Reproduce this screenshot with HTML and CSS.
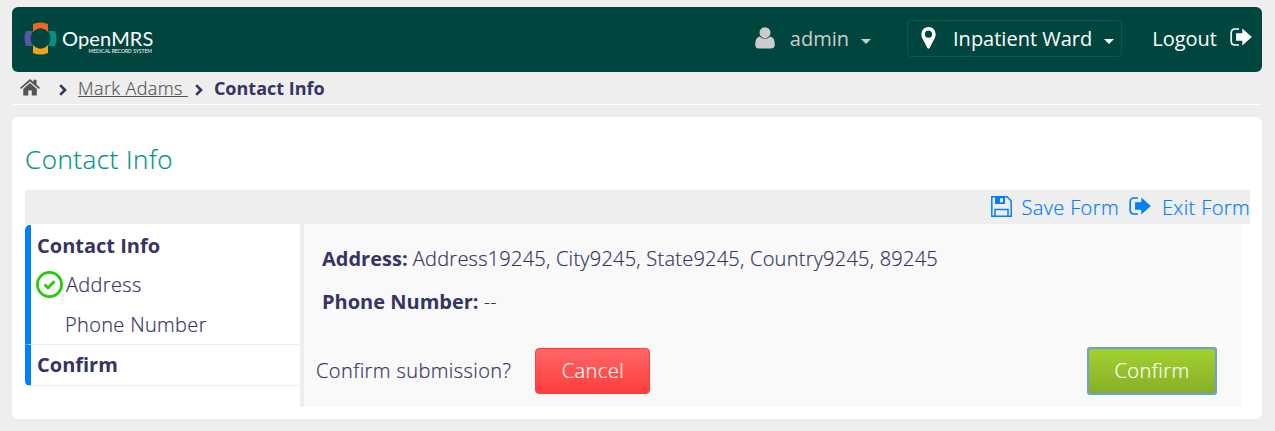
FILE: index.html
```html
<!DOCTYPE html>
<html lang="en">
<head>
<meta charset="utf-8">
<title>Contact Info</title>
<link rel="stylesheet" href="styles.css">
</head>
<body>
<svg width="0" height="0" class="defs">
  <symbol id="exit" viewBox="0 0 22 18">
    <path d="M9 1H5Q1.200 1 1.200 5v8q0 4 3.800 4h4" fill="none" stroke="currentColor" stroke-width="1.700"/>
    <path d="M6 5.300h6.300V.5L21.800 9l-9.500 8.500v-4.800H6z" fill="currentColor"/>
  </symbol>
  <symbol id="chevron" viewBox="0 0 8 12">
    <path d="M1.200 1.200L6 6l-4.800 4.800" fill="none" stroke="currentColor" stroke-width="2.600"/>
  </symbol>
</svg>
<header class="topbar">
  <div class="logo">
    <svg class="logo-mark" width="33" height="33" viewBox="0 0 33 33">
      <path d="M9 2Q16.500-1 24 2v8Q16.500 2.500 9 10z" fill="#f26522"/>
      <path d="M9 31q7.500 3 15 0v-8q-7.500 7.500-15 0z" fill="#eea616"/>
      <path d="M2 9q-3 7.500 0 15h7q-5-7.500 0-15z" fill="#5b57a6"/>
      <path d="M31 9q3 7.500 0 15h-7q5-7.500 0-15z" fill="#009384"/>
    </svg>
    <div class="logo-text"><span class="logo-name">OpenMRS</span><span class="logo-sub">MEDICAL RECORD SYSTEM</span></div>
  </div>
  <nav class="tools">
    <div class="user">
      <svg width="20" height="22" viewBox="0 0 20 22" fill="currentColor"><circle cx="10" cy="5.700" r="5.500"/><path d="M4.500 9.500Q10 14 15.500 9.500q4.300 1 4.300 8 0 4-3.800 4H4q-3.800 0-3.800-4 0-7 4.300-8z"/></svg>
      <span class="user-name">admin</span><i class="caret"></i>
    </div>
    <div class="location">
      <svg width="15" height="22" viewBox="0 0 15 22"><path fill="currentColor" fill-rule="evenodd" d="M7.500 0A7.200 7.200 0 0 1 14.700 7.200Q14.700 9 13.800 11L8.600 21q-1.100 1.400-2.200 0L1.200 11Q.3 9 .3 7.200A7.200 7.200 0 0 1 7.500 0zm0 3.600a3.600 3.600 0 1 0 0 7.200 3.600 3.600 0 0 0 0-7.200z"/></svg>
      <span class="location-name">Inpatient Ward</span><i class="caret"></i>
    </div>
    <div class="logout"><span>Logout</span><svg width="22" height="18"><use href="#exit"/></svg></div>
  </nav>
</header>
<nav class="crumbs">
  <svg class="home" width="20" height="17" viewBox="0 0 20 17" fill="currentColor"><path d="M10 0l3.500 3V.8h3v4.800L20 8.700l-1 1.300-9-7.600L1 10 0 8.700z"/><path d="M10 4l6.800 5.800V16.500h-5v-5H8.300v5h-5V9.800z"/></svg>
  <svg class="sep sep-first" width="8" height="12"><use href="#chevron"/></svg>
  <a class="crumb-link">Mark Adams&nbsp;</a>
  <svg class="sep sep-second" width="8" height="12"><use href="#chevron"/></svg>
  <b class="crumb-current">Contact Info</b>
</nav>
<main class="card">
  <h2 class="title">Contact Info</h2>
  <div class="form-bar">
    <a class="save"><svg width="21" height="21" viewBox="0 0 21 21"><path d="M.8.800H16L20.200 5v15.200H.8zM4 20v-6.500h13V20" fill="none" stroke="currentColor" stroke-width="1.500"/><path fill="currentColor" fill-rule="evenodd" d="M4 1h10v7H4zm5 1.200v4h3v-4z"/></svg><span>Save Form</span></a>
    <a class="exit"><svg width="22" height="18"><use href="#exit"/></svg><span>Exit Form</span></a>
  </div>
  <div class="form-body">
    <ul class="steps">
      <li class="section">
        <div class="step-title">Contact Info</div>
        <div class="step done"><svg width="27" height="27" viewBox="0 0 27 27" fill="none" stroke="#2c0"><circle cx="13.500" cy="13.500" r="12.100" stroke-width="2.700"/><path d="M8.500 13.500l3.500 3.300 6.500-6.500" stroke-width="2.700"/></svg><span>Address</span></div>
        <div class="step">Phone Number</div>
      </li>
      <li class="section"><div class="step-title">Confirm</div></li>
    </ul>
    <section class="panel">
      <p class="field"><b>Address:</b> <span class="address">Address19245, City9245, State9245, Country9245, 89245</span></p>
      <p class="field"><b>Phone Number:</b> <span>--</span></p>
      <div class="actions">
        <span class="question">Confirm submission?</span>
        <button class="btn cancel">Cancel</button>
        <button class="btn confirm">Confirm</button>
      </div>
    </section>
  </div>
</main>
</body>
</html>
```
FILE: styles.css
```css
* { box-sizing: border-box; }
body { margin: 0; padding: 7px 13px 0 12px; background: #eee; color: #363463; font: 300 20px/40px "Open Sans", "Noto Sans", sans-serif; white-space: nowrap; }
svg { display: block; flex: none; }
.defs { position: absolute; }
.topbar { display: flex; justify-content: space-between; height: 65px; padding: 0 10px 0 12px; border-radius: 6px; background: #00463f; color: #fff; font-weight: 400; }
.logo { display: flex; padding-top: 15px; }
.logo-text { display: flex; flex-direction: column; width: 92px; margin-left: 5px; padding-top: 5px; }
.logo-name { font: 400 20px/23px Lato, sans-serif; letter-spacing: .15px; }
.logo-sub { align-self: flex-end; margin: -2px 2px 0 0; font: 400 5px/6px Lato, sans-serif; }
.tools { display: flex; align-items: center; height: 62px; }
.tools span { padding-top: 1px; }
.user { display: flex; align-items: center; color: #ccc; }
.user-name { margin-left: 15px; }
.caret { margin: 6px 0 0 12px; border: 5px solid transparent; border-top-color: currentColor; border-bottom: 0; }
.location { display: flex; align-items: center; height: 37px; margin-left: 36px; padding: 0 7px 0 13px; border: 1px solid #005e52; border-radius: 4px; }
.location-name { margin-left: 17px; }
.logout { display: flex; align-items: center; margin-left: 30px; }
.logout svg { margin-left: 13px; margin-top: -2px; }
.crumbs { display: flex; align-items: center; height: 33px; padding-left: 8px; border-bottom: 1px solid #fff; font-size: 18px; line-height: 32px; }
.home { margin-top: -1px; color: #555; }
.sep-first { margin: 3px 0 0 19px; }
.crumb-link { margin-left: 11px; color: #555; letter-spacing: .4px; text-decoration: underline; }
.sep-second { margin: 3px 0 0 7px; }
.crumb-current { margin-left: 11px; font-weight: 700; }
.card { height: 302px; margin-top: 12px; padding: 22px 12px 12px 13px; border-radius: 6px; background: #fff; }
.title { margin: 0 0 11px; color: #009384; font-size: 26px; font-weight: 300; line-height: 40px; letter-spacing: .5px; }
.crumb-link, .title, .form-bar, .step, .address, .question, .btn { -webkit-text-stroke: .2px currentColor; }
.form-bar { display: flex; justify-content: flex-end; align-items: center; height: 34px; background: #eee; color: #007fff; line-height: 34px; }
.save, .exit { display: flex; align-items: center; }
.save svg { margin-top: -2px; }
.save span, .exit span { padding-top: 1px; letter-spacing: .38px; }
.save span { margin-left: 9px; }
.exit { margin-left: 10px; }
.exit svg { margin-top: -3px; }
.exit span { margin-left: 11px; }
.form-body { display: flex; height: 183px; }
.steps { width: 275px; margin: 0; padding: 1px 0 0; list-style: none; }
.section { border-left: 6px solid #007fff; border-bottom: 1px solid #eee; }
.section:first-child { border-top-left-radius: 5px; }
.section:last-child { border-bottom-left-radius: 5px; }
.step-title { height: 40px; padding-left: 6px; font-weight: 700; line-height: 41px; }
.section:last-child .step-title { line-height: 39px; }
.step { height: 40px; padding-left: 34px; line-height: 41px; letter-spacing: .33px; }
.done { display: flex; align-items: center; height: 39px; padding-left: 5px; }
.done span { margin-left: 3px; }
.panel { width: 941px; padding: 15px 24px 0 12px; border-left: 4px solid #eee; background: #f9f9f9; }
.field { margin: 0 0 3px 6px; }
.field b { font-weight: 700; }
.address { letter-spacing: .24px; }
.actions { display: flex; align-items: center; height: 48px; margin-top: 25px; letter-spacing: .42px; }
.btn { height: 46px; padding: 0 0 1px; border-radius: 4px; color: #fff; font: inherit; letter-spacing: .45px; }
.cancel { width: 115px; margin-left: 24px; border: 1px solid #ff3d3d; background: linear-gradient(#ff6666, #ff3d3d); }
.confirm { width: 130px; height: 48px; margin-left: auto; border: 2px solid #6b9fd9; border-radius: 3px; background: linear-gradient(#a2d12e, #88af28); }
```
